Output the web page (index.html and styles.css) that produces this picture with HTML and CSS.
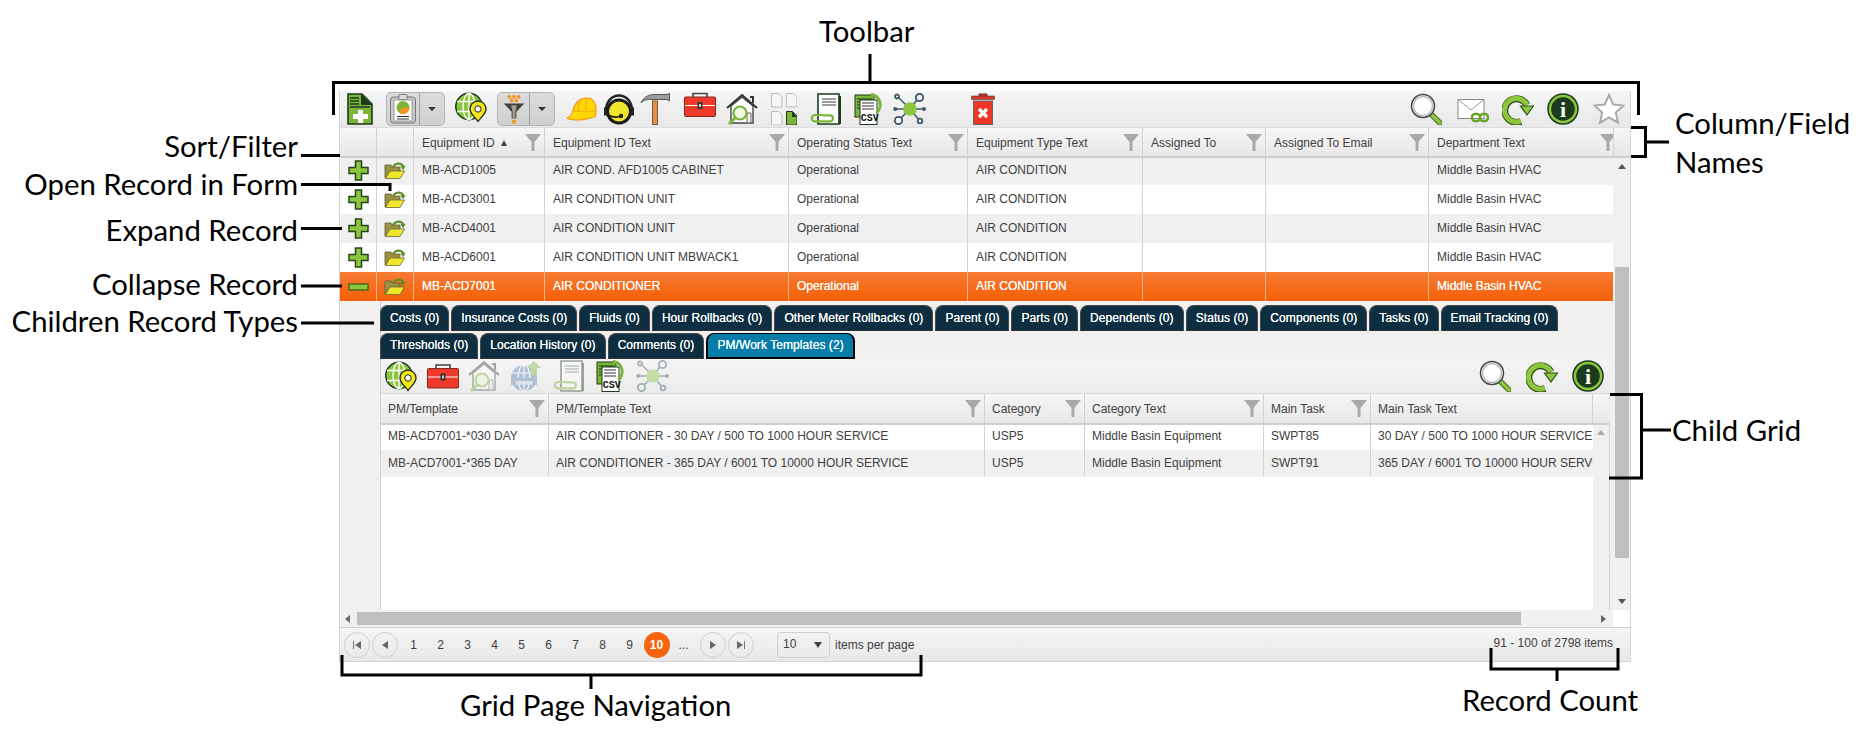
FILE: index.html
```html
<!DOCTYPE html>
<html lang="en">
<head>
<meta charset="utf-8">
<title>Equipment grid</title>
<link rel="stylesheet" href="styles.css">
</head>
<body>
<svg class="defs" width="0" height="0" aria-hidden="true">
  <symbol id="i-new" viewBox="0 0 26 32">
    <path d="M1 1h14l10 10v20H1z" fill="#7ab539" stroke="#1c3a1c" stroke-width="1.6"/>
    <path d="M14 1l11 11H14z" fill="#1c3a1c"/>
    <path d="M3 5h9M3 8h9M3 11h9M3 14h20" stroke="#1c3a1c" stroke-width="1.3" fill="none"/>
    <path d="M11 17h5v4h5v5h-5v4h-5v-4H6v-5h5z" fill="#fff"/>
  </symbol>
  <symbol id="i-report" viewBox="0 0 28 30">
    <rect x="1.5" y="3" width="25" height="26" rx="3" fill="#c9c9c9" stroke="#777"/>
    <rect x="10" y=".5" width="8" height="5" rx="1" fill="#ddd" stroke="#777"/>
    <rect x="5" y="6" width="18" height="21" fill="#fff" stroke="#999"/>
    <circle cx="14" cy="13.5" r="6.5" fill="#7ab539"/>
    <path d="M14 13.5h6.5a6.5 6.5 0 0 1-11 4.6z" fill="#f7941d"/>
    <path d="M8 22.5h12M8 25h12" stroke="#333" stroke-width="1"/>
  </symbol>
  <symbol id="i-globe" viewBox="0 0 32 30">
    <circle cx="14" cy="14.5" r="13.2" fill="#8cc63f" stroke="#1c3a1c" stroke-width="1.5"/>
    <ellipse cx="14" cy="14.5" rx="6" ry="13" fill="none" stroke="#fff" stroke-width="1.4"/>
    <path d="M14 1.5v26M2 9.5h24M2 19.5h24" stroke="#fff" stroke-width="1.4"/>
    <path d="M23 9a8 8 0 0 1 8 8c0 5-5 8-8 12.500c-3-4.500-8-7.500-8-12.500a8 8 0 0 1 8-8z" fill="#f5e616" stroke="#222" stroke-width="1.3"/>
    <circle cx="23" cy="17" r="3.200" fill="#fff" stroke="#222"/>
  </symbol>
  <symbol id="i-funnel" viewBox="0 0 26 32">
    <g fill="#f7941d"><circle cx="8" cy="3" r="2"/><circle cx="13" cy="3" r="2"/><circle cx="18" cy="3" r="2"/><circle cx="10.500" cy="7" r="2"/><circle cx="15.500" cy="7" r="2"/><circle cx="13" cy="29.500" r="2.200"/></g>
    <path d="M2 10h22l-8.500 9v7h-5v-7z" fill="#3f3f3f"/>
    <path d="M10 12h6l-1.500 7v7h-3v-7z" fill="#a59d92"/>
  </symbol>
  <symbol id="i-hat" viewBox="0 0 31 24">
    <path d="M1 21c3-1 5-3 6-8C9 6 14 1 21 1c6 0 9 5 9 11 0 4 0 6-1 8-7 1-10 3-16 3-5 0-9 0-12-2z" fill="#ffd800" stroke="#f7941d" stroke-width="1.200"/>
    <path d="M16 2c-3 3-4 7-4 12M21 2c-1 4-1 7-1 11M7 14c7 1 15 1 23 0" fill="none" stroke="#f7a81d" stroke-width="1.200"/>
  </symbol>
  <symbol id="i-headset" viewBox="0 0 32 31">
    <path d="M3 17C3 8 9 2 16 2s13 6 13 15" fill="none" stroke="#222" stroke-width="2.500"/>
    <circle cx="16" cy="18" r="11.500" fill="#f1e52c" stroke="#1a1a1a" stroke-width="3"/>
    <path d="M1 14h3v8H1zM28 14h3v8h-3z" fill="#222"/>
    <path d="M6 22c4 2 7 2 11 1" fill="none" stroke="#222" stroke-width="1.800"/>
    <circle cx="18" cy="22.500" r="2.200" fill="#222"/>
  </symbol>
  <symbol id="i-hammer" viewBox="0 0 30 32">
    <rect x="12.500" y="8" width="5" height="23.500" fill="#dd9152" stroke="#7f5a35"/>
    <path d="M1 10C3 5 8 1.500 14 1.500h13l2.500-1V8L27 6.500H12C7 6 3 7 1 10z" fill="#9c9c9c" stroke="#555"/>
  </symbol>
  <symbol id="i-box" viewBox="0 0 32 25">
    <path d="M9 6V1.500h14V6" fill="none" stroke="#444" stroke-width="1.600"/>
    <rect x=".5" y="5" width="31" height="19.500" rx="1" fill="#ef3a2b" stroke="#7d2b22"/>
    <path d="M1 13.500h30" stroke="#fff"/>
    <rect x="13.500" y="10" width="5" height="7" fill="#333"/>
    <rect x="15" y="12" width="2" height="3" fill="#ccc"/>
  </symbol>
  <symbol id="i-house" viewBox="0 0 32 32">
    <path d="M5 13v17h22V13L16 4z" fill="#fff" stroke="#444" stroke-width="1.400"/>
    <path d="M1 15L16 2l15 13M24 4h3v6" fill="none" stroke="#333" stroke-width="2"/>
    <path d="M21 20h4v10h-4z" fill="#eee" stroke="#666"/>
    <circle cx="14" cy="20" r="6.500" fill="#f1f8e4" stroke="#7ab539" stroke-width="2.200"/>
    <path d="M9 25l-6 6" stroke="#7ab539" stroke-width="3"/>
  </symbol>
  <symbol id="i-sheets" viewBox="0 0 26 32">
    <g fill="#f6f6f6" stroke="#bbb">
      <path d="M.5.5h7L11 4v10H.5z"/><path d="M15.500.5h7L26 4v10H15.500z"/><path d="M.5 18.500h7L11 22v10H.5z"/>
    </g>
    <path d="M15.500 18.500h6L26 23v9H15.500z" fill="#7ab539" stroke="#1c3a1c"/>
    <path d="M21 18.500L26 24h-5z" fill="#1c3a1c"/>
  </symbol>
  <symbol id="i-attach" viewBox="0 0 31 32">
    <path d="M8 1h21v30H8z" fill="#fff" stroke="#1c3a1c" stroke-width="1.600"/>
    <path d="M30 3v28" stroke="#1c3a1c" stroke-width="2"/>
    <path d="M12 6h14M12 9h14M12 12h14" stroke="#3c3c3c" stroke-width="1.200"/>
    <path d="M13 22H5a3.200 3.200 0 0 0 0 6.400h15a3 3 0 0 0 0-6h-7" fill="none" stroke="#7ab539" stroke-width="2.200"/>
  </symbol>
  <symbol id="i-csv" viewBox="0 0 28 32">
    <rect x="1" y="2" width="19" height="22" fill="#7ab539" stroke="#1c3a1c"/>
    <path d="M3 6h15M3 9h15M3 12h15M3 15h15" stroke="#1c3a1c"/>
    <rect x="6" y="7" width="17" height="24.500" fill="#fff" stroke="#1c3a1c"/>
    <path d="M8 10h12M8 13h12M8 16h12" stroke="#333"/>
    <path d="M17 1.500c6 .5 10 6 9 12-.5 3-2 5-3.500 6.500" fill="none" stroke="#7ab539" stroke-width="3"/>
  </symbol>
  <symbol id="i-net" viewBox="0 0 33 32">
    <path d="M4 3l13 13M26 4L17 16M2 16h29M5 28l12-12M27 28L17 16" stroke="#3a5868" stroke-width="1.500"/>
    <circle cx="17" cy="16" r="6.800" fill="#8cc63f"/>
    <g fill="#f2f2f2" stroke="#3a5868" stroke-width="1.800">
      <circle cx="4" cy="3.500" r="2"/><circle cx="26.500" cy="4.500" r="3.700"/><circle cx="5.500" cy="27.500" r="3.700"/><circle cx="27" cy="28" r="2.300"/>
    </g>
    <circle cx="2.200" cy="16" r="2" fill="#3a5868"/><circle cx="31" cy="16" r="2" fill="#3a5868"/>
  </symbol>
  <symbol id="i-trash" viewBox="0 0 24 32">
    <path d="M8 3V1h8v2" fill="#c33" stroke="#7a2a22"/>
    <path d="M.5 3h23v3.500H.5z" fill="#d9352a" stroke="#444" stroke-width=".6"/>
    <rect x="2.500" y="8" width="19" height="23.500" fill="#ed3528" stroke="#666"/>
    <path d="M8 16l8 8M16 16l-8 8" stroke="#fff" stroke-width="3.200"/>
  </symbol>
  <symbol id="i-search" viewBox="0 0 32 32">
    <path d="M21 21l9 9" stroke="#3f6a1e" stroke-width="5.500" stroke-linecap="round"/>
    <path d="M21 21l9 9" stroke="#8cc63f" stroke-width="3.500" stroke-linecap="round"/>
    <circle cx="13" cy="13" r="11.500" fill="#fff" stroke="#444" stroke-width="1.500"/>
    <circle cx="13" cy="13" r="9.500" fill="#fff" stroke="#bbb" stroke-width="1.500"/>
  </symbol>
  <symbol id="i-mail" viewBox="0 0 32 32">
    <rect x="1" y="6.500" width="26" height="19" fill="#fff" stroke="#888"/>
    <path d="M1 6.500l13 10.500L27 6.500" fill="none" stroke="#999"/>
    <g fill="none" stroke="#6aa52a" stroke-width="2.400">
      <rect x="15" y="21" width="8" height="7" rx="3"/><rect x="23" y="21" width="8" height="7" rx="3"/>
    </g>
  </symbol>
  <symbol id="i-refresh" viewBox="0 0 32 32">
    <path d="M19 28.500A11.800 11.800 0 1 1 25 12" fill="none" stroke="#2f5218" stroke-width="7"/>
    <path d="M19 28A11.800 11.800 0 1 1 25 12" fill="none" stroke="#8cc63f" stroke-width="5"/>
    <path d="M18.500 13h13L25 22z" fill="#8cc63f" stroke="#2f5218" stroke-width="1.200"/>
  </symbol>
  <symbol id="i-info" viewBox="0 0 32 32">
    <circle cx="16" cy="16" r="15" fill="#8cc63f" stroke="#1c3a1c" stroke-width="1.500"/>
    <circle cx="16" cy="16" r="11.800" fill="#1c3a1c"/>
  </symbol>
  <symbol id="i-star" viewBox="0 0 32 32">
    <path d="M16 2l4.300 9.500 10.200 1.100-7.700 6.900 2.200 10.200L16 24.500l-9 5.200 2.200-10.200-7.700-6.900 10.200-1.100z" fill="#fff" stroke="#aaa" stroke-width="2"/>
  </symbol>
  <symbol id="i-www" viewBox="0 0 30 32">
    <circle cx="13" cy="18" r="13" fill="#5b82b5"/>
    <path d="M0 13h26M13 5v26" stroke="#fff" stroke-width="1.200"/>
    <ellipse cx="13" cy="18" rx="6" ry="13" fill="none" stroke="#fff" stroke-width="1.200"/>
    <rect x="0" y="18" width="26" height="7" fill="#5b82b5"/>
    <path d="M23 1l7 7h-4v7h-6V8h-4z" fill="#7ab539"/>
  </symbol>
  <symbol id="i-plus" viewBox="0 0 21 21">
    <path d="M7.500 1h6v6.500H20v6h-6.500V20h-6v-6.500H1v-6h6.500z" fill="#8cc63f" stroke="#24451a" stroke-width="1.500"/>
  </symbol>
  <symbol id="i-minus" viewBox="0 0 21 8">
    <rect x="1" y="1" width="19" height="6" fill="#8cc63f" stroke="#4b6a1c" stroke-width="1.500"/>
  </symbol>
  <symbol id="i-folder" viewBox="0 0 22 17">
    <path d="M1 16V3h6l1 2h8v4L1 16z" fill="#9c9040" stroke="#5a5a3a" stroke-width=".8"/>
    <path d="M6 9h14.500L16 16.500H1.500z" fill="#efe72c" stroke="#6b6b35" stroke-width=".8"/>
    <path d="M9 5C11 1 17 0 19.500 4.500" fill="none" stroke="#5f8f2a" stroke-width="2.200"/>
    <path d="M16.500 4h5L19 8.500z" fill="#5f8f2a"/>
  </symbol>
  <symbol id="i-filter" viewBox="0 0 16 17">
    <path d="M0 0h16L9.500 8v9h-3V8z" fill="#a9a9a9"/>
  </symbol>
</svg>

<div class="stage">
  <section class="widget">
    <div class="toolbar main-toolbar">
      <svg class="ico w26"><use href="#i-new"/></svg>
      <div class="split g13 w59"><span class="split-main"><svg class="ico-report"><use href="#i-report"/></svg></span><span class="split-caret"></span></div>
      <svg class="ico h30 g10 top"><use href="#i-globe"/></svg>
      <div class="split g10 w58"><span class="split-main"><svg class="ico-report"><use href="#i-funnel"/></svg></span><span class="split-caret"></span></div>
      <svg class="ico w31 h24 g11"><use href="#i-hat"/></svg>
      <svg class="ico g6"><use href="#i-headset"/></svg>
      <svg class="ico w30 g5"><use href="#i-hammer"/></svg>
      <svg class="ico h25 g14 top"><use href="#i-box"/></svg>
      <svg class="ico g10"><use href="#i-house"/></svg>
      <svg class="ico w26 g13"><use href="#i-sheets"/></svg>
      <svg class="ico w31 g13"><use href="#i-attach"/></svg>
      <svg class="ico w28 g13" viewBox="0 0 28 32"><use href="#i-csv"/><text class="svg-csv" x="6.800" y="28">CSV</text></svg>
      <svg class="ico w33 g11"><use href="#i-net"/></svg>
      <svg class="ico w24 g45"><use href="#i-trash"/></svg>
      <div class="toolbar-end">
        <svg class="ico"><use href="#i-search"/></svg>
        <svg class="ico g15"><use href="#i-mail"/></svg>
        <svg class="ico g13"><use href="#i-refresh"/></svg>
        <svg class="ico g13" viewBox="0 0 32 32"><use href="#i-info"/><text class="svg-i" x="16" y="24">i</text></svg>
        <svg class="ico g14"><use href="#i-star"/></svg>
      </div>
    </div>

    <div class="grid-head main-cols">
      <div class="hcell"></div>
      <div class="hcell"></div>
      <div class="hcell"><span>Equipment ID</span><i class="sort"></i><svg class="filter"><use href="#i-filter"/></svg></div>
      <div class="hcell"><span>Equipment ID Text</span><svg class="filter"><use href="#i-filter"/></svg></div>
      <div class="hcell"><span>Operating Status Text</span><svg class="filter"><use href="#i-filter"/></svg></div>
      <div class="hcell"><span>Equipment Type Text</span><svg class="filter"><use href="#i-filter"/></svg></div>
      <div class="hcell"><span>Assigned To</span><svg class="filter"><use href="#i-filter"/></svg></div>
      <div class="hcell"><span>Assigned To Email</span><svg class="filter"><use href="#i-filter"/></svg></div>
      <div class="hcell clip"><span>Department Text</span><svg class="filter"><use href="#i-filter"/></svg></div>
      <div class="hcell end"></div>
    </div>

    <div class="grid-main">
      <div class="grid-content">
        <div class="row main-cols odd">
          <div class="cell icon"><svg class="plus"><use href="#i-plus"/></svg></div>
          <div class="cell icon"><svg class="folder"><use href="#i-folder"/></svg></div>
          <div class="cell">MB-ACD1005</div><div class="cell">AIR COND. AFD1005 CABINET</div><div class="cell">Operational</div><div class="cell">AIR CONDITION</div><div class="cell"></div><div class="cell"></div><div class="cell">Middle Basin HVAC</div>
        </div>
        <div class="row main-cols">
          <div class="cell icon"><svg class="plus"><use href="#i-plus"/></svg></div>
          <div class="cell icon"><svg class="folder"><use href="#i-folder"/></svg></div>
          <div class="cell">MB-ACD3001</div><div class="cell">AIR CONDITION UNIT</div><div class="cell">Operational</div><div class="cell">AIR CONDITION</div><div class="cell"></div><div class="cell"></div><div class="cell">Middle Basin HVAC</div>
        </div>
        <div class="row main-cols odd">
          <div class="cell icon"><svg class="plus"><use href="#i-plus"/></svg></div>
          <div class="cell icon"><svg class="folder"><use href="#i-folder"/></svg></div>
          <div class="cell">MB-ACD4001</div><div class="cell">AIR CONDITION UNIT</div><div class="cell">Operational</div><div class="cell">AIR CONDITION</div><div class="cell"></div><div class="cell"></div><div class="cell">Middle Basin HVAC</div>
        </div>
        <div class="row main-cols">
          <div class="cell icon"><svg class="plus"><use href="#i-plus"/></svg></div>
          <div class="cell icon"><svg class="folder"><use href="#i-folder"/></svg></div>
          <div class="cell">MB-ACD6001</div><div class="cell">AIR CONDITION UNIT MBWACK1</div><div class="cell">Operational</div><div class="cell">AIR CONDITION</div><div class="cell"></div><div class="cell"></div><div class="cell">Middle Basin HVAC</div>
        </div>
        <div class="row main-cols selected">
          <div class="cell icon"><svg class="minus"><use href="#i-minus"/></svg></div>
          <div class="cell icon"><svg class="folder"><use href="#i-folder"/></svg></div>
          <div class="cell">MB-ACD7001</div><div class="cell">AIR CONDITIONER</div><div class="cell">Operational</div><div class="cell">AIR CONDITION</div><div class="cell"></div><div class="cell"></div><div class="cell">Middle Basin HVAC</div>
        </div>

        <div class="detail">
          <div class="detail-inner">
            <div class="tabs">
              <span class="tab">Costs (0)</span>
              <span class="tab">Insurance Costs (0)</span>
              <span class="tab">Fluids (0)</span>
              <span class="tab">Hour Rollbacks (0)</span>
              <span class="tab">Other Meter Rollbacks (0)</span>
              <span class="tab">Parent (0)</span>
              <span class="tab">Parts (0)</span>
              <span class="tab">Dependents (0)</span>
              <span class="tab">Status (0)</span>
              <span class="tab">Components (0)</span>
              <span class="tab">Tasks (0)</span>
              <span class="tab">Email Tracking (0)</span>
              <span class="tab">Thresholds (0)</span>
              <span class="tab">Location History (0)</span>
              <span class="tab">Comments (0)</span>
              <span class="tab active">PM/Work Templates (2)</span>
            </div>
            <div class="toolbar child-toolbar">
              <svg class="ico"><use href="#i-globe"/></svg>
              <svg class="ico g10"><use href="#i-box"/></svg>
              <svg class="ico g9 faded"><use href="#i-house"/></svg>
              <svg class="ico w30 g11 faded" viewBox="0 0 30 32"><use href="#i-www"/><text class="svg-www" x="13" y="24.500">www</text></svg>
              <svg class="ico w31 g12 faded"><use href="#i-attach"/></svg>
              <svg class="ico w28 g12" viewBox="0 0 28 32"><use href="#i-csv"/><text class="svg-csv" x="6.800" y="28">CSV</text></svg>
              <svg class="ico w33 g12 faded"><use href="#i-net"/></svg>
              <div class="toolbar-end">
                <svg class="ico"><use href="#i-search"/></svg>
                <svg class="ico g15"><use href="#i-refresh"/></svg>
                <svg class="ico g14" viewBox="0 0 32 32"><use href="#i-info"/><text class="svg-i" x="16" y="24">i</text></svg>
              </div>
            </div>
            <div class="grid-head child-cols">
              <div class="hcell"><span>PM/Template</span><svg class="filter"><use href="#i-filter"/></svg></div>
              <div class="hcell"><span>PM/Template Text</span><svg class="filter"><use href="#i-filter"/></svg></div>
              <div class="hcell"><span>Category</span><svg class="filter"><use href="#i-filter"/></svg></div>
              <div class="hcell"><span>Category Text</span><svg class="filter"><use href="#i-filter"/></svg></div>
              <div class="hcell"><span>Main Task</span><svg class="filter"><use href="#i-filter"/></svg></div>
              <div class="hcell"><span>Main Task Text</span></div>
              <div class="hcell end"></div>
            </div>
            <div class="child-body">
              <div class="child-rows">
                <div class="row child-row child-data">
                  <div class="cell">MB-ACD7001-*030 DAY</div><div class="cell">AIR CONDITIONER - 30 DAY / 500 TO 1000 HOUR SERVICE</div><div class="cell">USP5</div><div class="cell">Middle Basin Equipment</div><div class="cell">SWPT85</div><div class="cell last">30 DAY / 500 TO 1000 HOUR SERVICE</div>
                </div>
                <div class="row child-row child-data odd">
                  <div class="cell">MB-ACD7001-*365 DAY</div><div class="cell">AIR CONDITIONER - 365 DAY / 6001 TO 10000 HOUR SERVICE</div><div class="cell">USP5</div><div class="cell">Middle Basin Equipment</div><div class="cell">SWPT91</div><div class="cell last">365 DAY / 6001 TO 10000 HOUR SERVICE</div>
                </div>
              </div>
              <div class="child-scroll"><i class="arrow up pale"></i></div>
            </div>
          </div>
        </div>
      </div>
      <div class="vscroll">
        <i class="arrow up"></i>
        <div class="vthumb"></div>
        <i class="arrow down"></i>
      </div>
    </div>

    <div class="hscroll-row">
      <div class="hscroll">
        <i class="arrow left"></i>
        <div class="hthumb"></div>
        <i class="arrow right"></i>
      </div>
      <div class="corner"></div>
    </div>

    <footer class="pager">
      <span class="round"><i class="bar"></i><i class="arrow left"></i></span>
      <span class="round g2"><i class="arrow left"></i></span>
      <div class="pages">
        <span>1</span><span>2</span><span>3</span><span>4</span><span>5</span><span>6</span><span>7</span><span>8</span><span>9</span><span class="current">10</span><span>...</span>
      </div>
      <span class="round g3"><i class="arrow right"></i></span>
      <span class="round g2"><i class="arrow right"></i><i class="bar"></i></span>
      <div class="page-size"><span>10</span><i class="arrow down dark"></i></div>
      <span class="per-page">items per page</span>
      <span class="count">91 - 100 of 2798 items</span>
    </footer>
  </section>

  <svg class="notes" viewBox="0 0 1864 734" aria-hidden="true">
    <path d="M333.500 115V82.500H1638.500V115M870 54V82M1631 127.500H1645.500V156.500H1631M1645.500 142H1669M1609 394.500H1641.500V478H1609M1641.500 430H1671M301 155.500H536V150M504 155.500V148M301 184.500H390V191M301 228.500H342M301 286H342M301 323H374M342 655V675H921V655M591 675V689M1491 648V669H1618V648M1557 669V681"/>
  </svg>
  <div class="note n-toolbar">Toolbar</div>
  <div class="note n-columns">Column/Field<br>Names</div>
  <div class="note n-child">Child Grid</div>
  <div class="note side n-sort">Sort/Filter</div>
  <div class="note side n-open">Open Record in Form</div>
  <div class="note side n-expand">Expand Record</div>
  <div class="note side n-collapse">Collapse Record</div>
  <div class="note side n-types">Children Record Types</div>
  <div class="note n-nav">Grid Page Navigation</div>
  <div class="note n-count">Record Count</div>
</div>
</body>
</html>
```

FILE: styles.css
```css
html, body { margin: 0; padding: 0; background: #fff; }
body { font: 12px/1.2 "Liberation Sans", Arial, sans-serif; color: #404040; }
i { display: block; }
.defs { position: absolute; }

.stage { position: relative; width: 1864px; height: 734px; overflow: hidden; padding: 91px 0 0 339px; box-sizing: border-box; }
.widget { width: 1292px; height: 571px; box-sizing: border-box; border: 1px solid #d4d4d4; border-width: 0 1px 0 1px; display: flex; flex-direction: column; }

/* toolbars */
.toolbar { display: flex; align-items: center; box-sizing: border-box; background: linear-gradient(#f6f6f6, #e9e8e8); }
.main-toolbar { height: 36px; padding: 0 5px 0 7px; flex: none; }
.child-toolbar { height: 34px; padding: 0 6px 0 4px; flex: none; background: linear-gradient(#f5f5f5, #ebebeb); }
.toolbar-end { margin-left: auto; display: flex; align-items: center; }
.ico { width: 32px; height: 32px; flex: none; display: block; }
.w24 { width: 24px; } .w26 { width: 26px; } .w28 { width: 28px; } .w30 { width: 30px; } .w31 { width: 31px; } .w33 { width: 33px; }
.h24 { height: 24px; } .h25 { height: 25px; } .h30 { height: 30px; }
.top { align-self: flex-start; }
.main-toolbar .top { margin-top: 1px; }
.g2 { margin-left: 2px; } .g3 { margin-left: 3px; } .g5 { margin-left: 5px; } .g6 { margin-left: 6px; } .g9 { margin-left: 9px; }
.g10 { margin-left: 10px; } .g11 { margin-left: 11px; } .g12 { margin-left: 12px; } .g13 { margin-left: 13px; } .g14 { margin-left: 14px; }
.g15 { margin-left: 15px; } .g45 { margin-left: 45px; }
.faded { opacity: .42; }

.split { display: flex; height: 34px; box-sizing: border-box; border: 1px solid #b5b5b5; border-radius: 5px; background: linear-gradient(#dcdcdc, #cfcfcf); flex: none; }
.w59 { width: 59px; } .w58 { width: 58px; }
.split-main { flex: 1; display: flex; align-items: center; justify-content: center; border-right: 1px solid #9f9f9f; }
.ico-report { width: 28px; height: 30px; display: block; }
.split-caret { width: 24px; flex: none; position: relative; display: flex; align-items: center; justify-content: center; }
.split-caret::after { content: ""; border: 4px solid transparent; border-top: 4px solid #333; border-bottom: 0; }

/* grid */
.main-cols { display: grid; grid-template-columns: 37px 37px 131px 244px 179px 175px 123px 163px 184px 17px; }
.main-cols.row { grid-template-columns: 37px 37px 131px 244px 179px 175px 123px 163px 184px; }
.child-cols { display: grid; grid-template-columns: 168px 436px 100px 179px 107px 222px 17px; }
.child-row { display: grid; grid-template-columns: 168px 436px 100px 179px 107px 222px; }

.grid-head { position: relative; z-index: 1; flex: none; height: 29px; box-sizing: border-box; background: linear-gradient(#f6f6f6, #e9e7e7); box-shadow: 0 2px 0 #cfcfcf; border-top: 1px solid #dcdcdc; }
.hcell { display: flex; align-items: center; padding: 0 3px 0 8px; border-right: 1px solid #d2d2d2; min-width: 0; overflow: hidden; white-space: nowrap; color: #404040; }
.hcell span { padding-top: 2px; }
.hcell.end { border-right: 0; padding: 0; }
.filter { width: 16px; height: 17px; margin-left: auto; flex: none; display: block; }
.clip { padding-right: 0; border-right: 0; box-shadow: 1px 0 0 #d2d2d2; }
.clip .filter { margin-right: -3px; }
.sort { width: 0; height: 0; margin: 2px 0 0 6px; border: 3.500px solid transparent; border-bottom: 6px solid #444; border-top: 0; }

.grid-main { flex: none; height: 454px; display: flex; }
.grid-content { width: 1273px; flex: none; display: flex; flex-direction: column; background: #f0f0f0; }
.row { height: 29px; background: #fff; flex: none; }
.row.odd { background: #f0f0f0; }
.row.selected { background: linear-gradient(#f77b35, #f55f05); color: #fff; text-shadow: 0 0 .6px #fff; }
.cell { display: flex; align-items: center; padding: 0 8px; border-right: 1px solid #d2d2d2; white-space: nowrap; overflow: hidden; min-width: 0; }
.main-cols .cell:last-child { border-right: 0; }
.selected .cell { border-right-color: #f9b48a; }
.cell.icon { padding: 0; justify-content: center; }
.plus { width: 21px; height: 21px; display: block; }
.minus { width: 21px; height: 8px; display: block; }
.folder { width: 22px; height: 17px; display: block; }

/* detail */
.detail { flex: 1; padding-left: 40px; min-height: 0; display: flex; }
.detail-inner { width: 1230px; box-sizing: border-box; flex: none; display: flex; flex-direction: column; border-left: 1px solid #d0d0d0; }
.tabs { display: flex; flex-wrap: wrap; column-gap: 2px; row-gap: 1px; margin-left: -1px; padding-top: 4px; height: 54px; flex: none; letter-spacing: .065px; }
.tab { height: 26px; box-sizing: border-box; padding: 0 9px; display: flex; align-items: center; color: #fff; background: #0e2f41; border: 1px solid #4a4a4a; border-bottom-color: #303030; border-radius: 8px 8px 0 0; text-shadow: 0 0 .6px #fff; white-space: nowrap; }
.tab.active { background: #067ca8; border: 1px solid #000; border-width: 1px 2px 2px; padding: 0 9px; }
.child-data { height: 27px; }
.child-cols { height: 30px; }
.child-cols .hcell, .child-data .cell { padding-left: 7px; }
.child-body { flex: 1; min-height: 0; display: flex; position: relative; z-index: 0; }
.child-rows { width: 1212px; flex: none; background: #fff; }
.child-scroll { flex: 1; background: #f0f0f0; border-right: 1px solid #d2d2d2; display: flex; flex-direction: column; align-items: center; padding-top: 7px; box-sizing: border-box; }
.last { border-right: 0; }

/* scrollbars */
.arrow { width: 0; height: 0; border: 4px solid transparent; flex: none; }
.arrow.up { border-top: 0; border-bottom: 5px solid #555; }
.arrow.up.pale { border-bottom-color: #aaa; }
.arrow.down { border-bottom: 0; border-top: 5px solid #555; }
.arrow.left { border-left: 0; border-right: 5px solid #666; }
.arrow.right { border-right: 0; border-left: 5px solid #666; }
.vscroll { flex: 1; background: #f0f0f0; display: flex; flex-direction: column; align-items: center; padding: 8px 0 6px; box-sizing: border-box; }
.vthumb { width: 14px; height: 291px; margin-top: 98px; background: #bfbfbf; }
.vscroll .arrow.down { margin-top: auto; }
.hscroll-row { display: flex; height: 17px; flex: none; }
.hscroll { width: 1273px; flex: none; background: #f0f0f0; display: flex; align-items: center; padding: 0 5px; box-sizing: border-box; }
.hthumb { width: 1164px; height: 13px; margin-left: 7px; background: #bfbfbf; }
.hscroll .arrow.right { margin-left: 80px; }
.corner { flex: 1; background: #fff; }

/* pager */
.pager { height: 35px; flex: none; box-sizing: border-box; border-top: 1px solid #d0d0d0; border-bottom: 1px solid #d4d4d4; background: linear-gradient(#f5f5f5, #e9e7e7); display: flex; align-items: center; padding: 0 17px 0 4px; }
.round { width: 26px; height: 26px; box-sizing: border-box; border: 1px solid #cfcfcf; border-radius: 50%; display: flex; align-items: center; justify-content: center; gap: 1px; flex: none; }
.round .arrow.left { border-left: 0; border-right-width: 6px; }
.round .arrow.right { border-right: 0; border-left-width: 6px; }
.bar { width: 1px; height: 8px; background: #777; }
.pages { display: flex; margin-left: 2px; }
.pages span { width: 27px; height: 26px; padding-top: 1px; box-sizing: border-box; display: flex; align-items: center; justify-content: center; }
.pages .current { width: 26px; margin: 0 .5px; border-radius: 50%; background: #f5650f; color: #fff; font-weight: bold; }
.page-size { width: 53px; height: 26px; margin-left: 23px; box-sizing: border-box; border: 1px solid #cfcfcf; border-radius: 4px; display: flex; align-items: center; justify-content: space-between; padding: 0 7px 0 5px; }
.arrow.down.dark { border-top-color: #444; border-top-width: 6px; }
.per-page { margin-left: 5px; padding-top: 2px; }
.count { margin-left: auto; margin-bottom: 2px; }

/* annotations */
.notes { position: absolute; left: 0; top: 0; width: 1864px; height: 734px; pointer-events: none; }
.notes path { fill: none; stroke: #000; stroke-width: 3; }
.note { position: absolute; font: 29.3px/39px Lato, "Open Sans", sans-serif; color: #000; white-space: nowrap; }
.side { right: 1566px; }
.n-toolbar { left: 819px; top: 11px; }
.n-columns { left: 1675px; top: 103px; }
.n-child { left: 1672px; top: 410px; }
.n-sort { top: 126px; }
.n-open { top: 164px; }
.n-expand { top: 210px; }
.n-collapse { top: 264px; }
.n-types { top: 301px; }
.n-nav { left: 460px; top: 685px; }
.n-count { left: 1462px; top: 680px; }

/* svg text */
.svg-csv { font: bold 10px "Liberation Mono", monospace; fill: #111; }
.svg-i { font: bold 22px "Liberation Serif", serif; fill: #fff; text-anchor: middle; }
.svg-www { font: bold 7px "Liberation Sans", sans-serif; fill: #fff; text-anchor: middle; }
```
